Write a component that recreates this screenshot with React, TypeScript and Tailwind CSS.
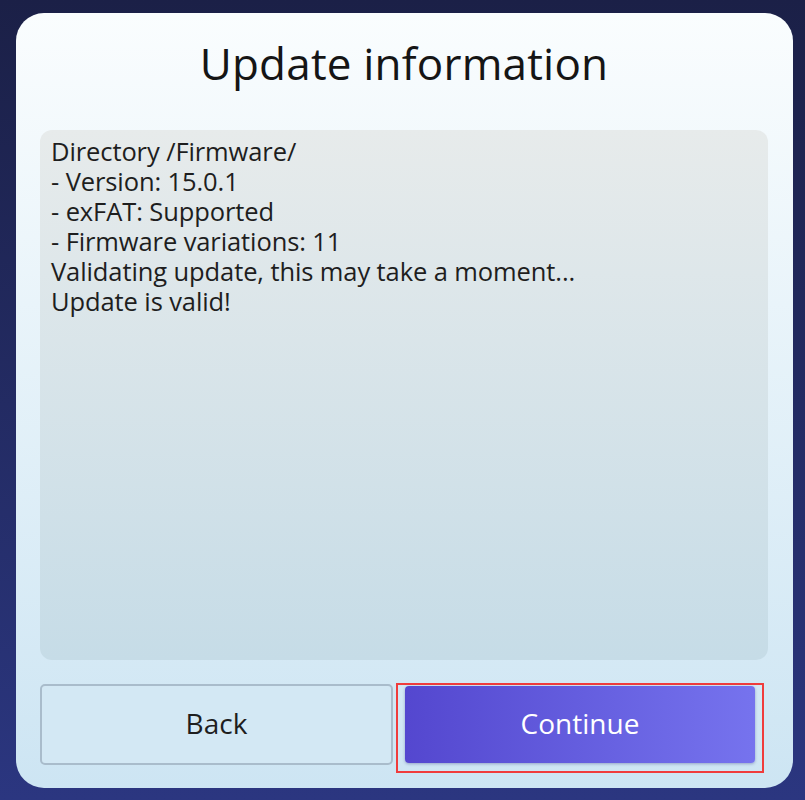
import React from "react";

export default function App() {
  const lines = [
    "Directory /Firmware/",
    "- Version: 15.0.1",
    "- exFAT: Supported",
    "- Firmware variations: 11",
    "Validating update, this may take a moment...",
    "Update is valid!",
  ];
  return (
    <div
      className="w-[805px] h-[800px] bg-gradient-to-b from-[#1b2047] to-[#2b3680] pt-[13px] pl-[16px] overflow-hidden"
      style={{ fontFamily: '"Open Sans", "Noto Sans", sans-serif' }}
    >
      <div className="w-[777px] h-[775px] rounded-[28px] bg-gradient-to-b from-[#fafdfe] to-[#cde5f3] flex flex-col pt-[24px] pl-[24px] pr-[25px]">
        <h1 className="text-[44px] leading-[52px] text-[#151515] text-center font-normal tracking-[0.2px]">
          Update information
        </h1>
        <div className="mt-[41px] h-[530px] rounded-[12px] bg-gradient-to-b from-[#e7ebeb] to-[#c6dce7] pl-[11px] pt-[6px] text-[25.5px] leading-[30px] text-[#1e1e1e] tracking-[-0.1px]">
          {lines.map((l) => (
            <div key={l}>{l}</div>
          ))}
        </div>
        <div className="mt-[24px] flex gap-[3px]">
          <button className="w-[353px] h-[81px] pb-[4px] rounded-[5px] border-2 border-[#a9bccb] bg-[#d3e8f4] text-[28px] text-[#1e1e1e]">
            Back
          </button>
          <div className="w-[368px] h-[90px] -mt-[1px] border-2 border-[#f03c3c] pt-[1px] px-[7px]">
            <button className="w-full h-[77px] pb-[4px] rounded-[4px] bg-gradient-to-r from-[#5447cf] to-[#7673ee] shadow-[0_1px_3px_rgba(40,40,120,0.35)] text-[28px] text-white">
              Continue
            </button>
          </div>
        </div>
      </div>
    </div>
  );
}
